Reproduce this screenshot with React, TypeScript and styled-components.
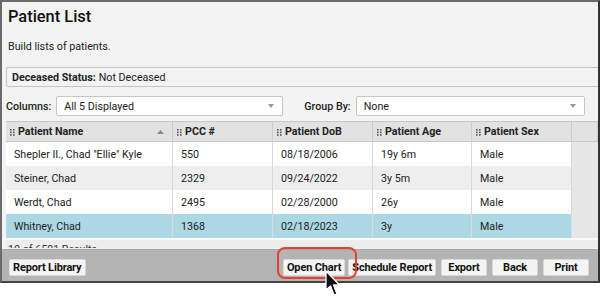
import * as React from 'react'
import styled, { createGlobalStyle } from 'styled-components'

const Global = createGlobalStyle`
  html, body { margin: 0; padding: 0; background: #fff; }
  body { font-family: Roboto, "Liberation Sans", Arial, sans-serif; color: #222; }
  #root { width: 600px; height: 297px; overflow: hidden; }
  * { box-sizing: border-box; }
`

const Frame = styled.div`
  width: 600px;
  height: 283px;
  border: 2px solid #6a6a6a;
  border-right-color: #333;
  border-bottom-color: #444;
  display: flex;
  flex-direction: column;
  background: #f3f3f3;
`

const Main = styled.div`
  flex: 1;
  overflow: hidden;
  display: flex;
  flex-direction: column;
  padding-left: 4px;
  font-size: 10.7px;
`

const Title = styled.h1`
  margin: 5px 0 0 2px;
  font-size: 16.4px;
  line-height: 20px;
  font-weight: 500;
  color: #111;
`

const Desc = styled.p`
  margin: 13px 0 0 2px;
  line-height: 14px;
`

const FilterBox = styled.div`
  margin-top: 13px;
  height: 20px;
  border: 1px solid #c4c4c4;
  border-right: none;
  border-radius: 2px 0 0 2px;
  display: flex;
  align-items: center;
  padding-left: 5px;
  b { font-weight: 700; margin-right: 3px; }
`

const Controls = styled.div`
  margin-top: 9px;
  height: 20px;
  display: flex;
  align-items: center;
`

const Label = styled.span<{ $gap?: number }>`
  margin-left: ${p => p.$gap ?? 0}px;
  margin-right: 5px;
  font-weight: 500;
`

const Select = styled.div<{ $w: number }>`
  width: ${p => p.$w}px;
  height: 20px;
  background: #fff;
  border: 1px solid #c6c6c6;
  border-radius: 2px;
  display: flex;
  align-items: center;
  justify-content: space-between;
  padding: 0 8px 0 7px;
  &::after {
    content: '';
    border-left: 3.5px solid transparent;
    border-right: 3.5px solid transparent;
    border-top: 4px solid #999;
  }
`

const Table = styled.div`
  margin-top: 5px;
  display: flex;
  flex-direction: column;
  background: linear-gradient(90deg, #ececec, #e6e6e6);
`

const HeaderRow = styled.div`
  display: flex;
  height: 21px;
  background: #e2e2e2;
  border-top: 1px solid #c9c9c9;
  border-bottom: 1px solid #c9c9c9;
`

const HeadCell = styled.div<{ $w?: number }>`
  width: ${p => (p.$w ? `${p.$w}px` : 'auto')};
  flex: ${p => (p.$w ? 'none' : '1')};
  display: flex;
  align-items: center;
  gap: 3px;
  padding: 0 8px 0 4px;
  font-weight: 700;
  border-right: 1px solid #cdcdcd;
  span { flex: 1; }
`

const Row = styled.div<{ $bg: string }>`
  display: flex;
  height: 24px;
  width: 566px;
  background: ${p => p.$bg};
`

const Cell = styled.div<{ $w: number }>`
  width: ${p => p.$w}px;
  display: flex;
  align-items: center;
  padding-left: 8px;
  border-right: 1px solid #dadada;
`

const Results = styled.div`
  height: 10px;
  overflow: hidden;
  border-top: 2px solid #fafafa;
  background: #ededed;
  line-height: 14px;
  padding: 3px 0 0 2px;
  color: #333;
`

const Footer = styled.div`
  height: 32px;
  background: #b4b4b4;
  border-top: 1px solid #a6a6a6;
  display: flex;
  align-items: flex-start;
  padding: 9px 9px 0 7px;
`

const Actions = styled.div`
  margin-left: auto;
  display: flex;
  gap: 5px;
`

const Button = styled.button`
  height: 17px;
  min-width: 46px;
  padding: 0 3px;
  background: #f4f4f4;
  border: 1px solid #d9d9d9;
  border-radius: 2px;
  font-family: Roboto, "Liberation Sans", Arial, sans-serif;
  font-size: 11px;
  letter-spacing: -0.15px;
  font-weight: 700;
  color: #111;
  line-height: 15px;
  white-space: nowrap;
`

const Spot = styled.div`
  position: relative;
  display: flex;
  margin-right: -2px;
`

const Ring = styled.div`
  position: absolute;
  left: -6px;
  right: -12px;
  top: -12px;
  bottom: -3px;
  border: 2px solid #e8402c;
  border-radius: 8px;
  pointer-events: none;
`

const Pointer = styled.svg`
  position: absolute;
  left: 42px;
  top: 11px;
  z-index: 5;
  overflow: visible;
`

const Grip = () => (
  <svg width="5" height="8" viewBox="0 0 5 8">
    {[0, 1].map(c => [0, 1, 2].map(r => <rect key={`${c}${r}`} x={c * 3} y={1 + r * 2.6} width="1.6" height="1.6" fill="#555" />))}
  </svg>
)

const cols = [
  { name: 'Patient Name', w: 167, sort: true },
  { name: 'PCC #', w: 100 },
  { name: 'Patient DoB', w: 100 },
  { name: 'Patient Age', w: 99 },
  { name: 'Patient Sex', w: 100 },
]

const rows = [
  { bg: '#ffffff', cells: ['Shepler II., Chad "Ellie" Kyle', '550', '08/18/2006', '19y 6m', 'Male'] },
  { bg: '#eeeeee', cells: ['Steiner, Chad', '2329', '09/24/2022', '3y 5m', 'Male'] },
  { bg: '#ffffff', cells: ['Werdt, Chad', '2495', '02/28/2000', '26y', 'Male'] },
  { bg: '#acd8e5', cells: ['Whitney, Chad', '1368', '02/18/2023', '3y', 'Male'] },
]

export default function App() {
  return (
    <>
      <Global />
      <Frame>
        <Main>
          <Title>Patient List</Title>
          <Desc>Build lists of patients.</Desc>
          <FilterBox>
            <b>Deceased Status:</b> Not Deceased
          </FilterBox>
          <Controls>
            <Label>Columns:</Label>
            <Select $w={227}>All 5 Displayed</Select>
            <Label $gap={21}>Group By:</Label>
            <Select $w={229}>None</Select>
          </Controls>
          <Table>
            <HeaderRow>
              {cols.map(c => (
                <HeadCell key={c.name} $w={c.w}>
                  <Grip />
                  <span>{c.name}</span>
                  {c.sort && (
                    <svg width="7" height="4" viewBox="0 0 7 4">
                      <path d="M0 4 L3.5 0 L7 4 Z" fill="#888" />
                    </svg>
                  )}
                </HeadCell>
              ))}
              <HeadCell />
            </HeaderRow>
            {rows.map((r, i) => (
              <Row key={i} $bg={r.bg}>
                {r.cells.map((t, j) => (
                  <Cell key={j} $w={cols[j].w}>{t}</Cell>
                ))}
              </Row>
            ))}
            <Results>10 of 6591 Results</Results>
          </Table>
        </Main>
        <Footer>
          <Button>Report Library</Button>
          <Actions>
            <Spot>
              <Button>Open Chart</Button>
              <Ring />
              <Pointer width="16" height="27" viewBox="0 0 16 27">
                <path d="M1 1 L1 20 L5.5 16 L9 25 L12 24 L8.5 15 L14.5 15 Z" fill="#111" stroke="#fff" strokeWidth="1.3" strokeLinejoin="round" />
              </Pointer>
            </Spot>
            <Button>Schedule Report</Button>
            <Button>Export</Button>
            <Button>Back</Button>
            <Button>Print</Button>
          </Actions>
        </Footer>
      </Frame>
    </>
  )
}
